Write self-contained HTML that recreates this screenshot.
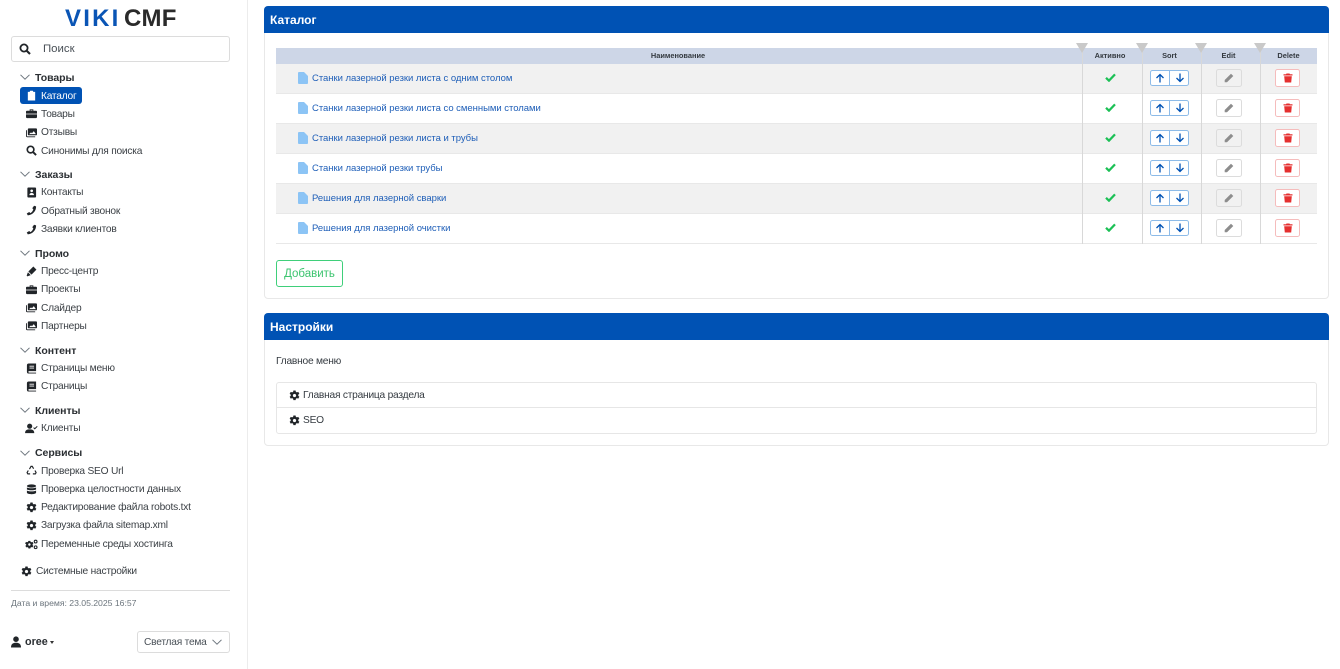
<!DOCTYPE html>
<html lang="ru"><head><meta charset="utf-8"><title>VikiCMF</title>
<style>
*{box-sizing:border-box}
html,body{margin:0;padding:0;background:#fff;width:1340px;height:669px;overflow:hidden}
body{position:relative;font-family:"Liberation Sans",sans-serif;font-size:10.2px;letter-spacing:-.22px;color:#333}
.a{position:absolute;white-space:nowrap}
#side{position:absolute;left:0;top:0;width:248px;height:669px;border-right:1px solid #ececec}
.h{position:absolute;left:35px;font-weight:bold;font-size:10.5px;letter-spacing:-.05px;line-height:16px;margin-top:1px;color:#2b2f33;white-space:nowrap}
.i{position:absolute;left:41px;line-height:16px;margin-top:1px;white-space:nowrap;color:#3a3f44}
.c{position:absolute;left:20px;width:10px;height:10px}
.ic{position:absolute;left:26px;width:11px;height:11px;fill:#212529}
.card{position:absolute;left:264px;width:1065px;border:1px solid #e8e8e8;border-radius:4px;background:#fff}
.ch{position:absolute;left:-1px;top:-1px;width:1065px;height:27px;background:#0052b4;border-radius:4px 4px 0 0;color:#fff;font-weight:bold;font-size:12px;letter-spacing:0;line-height:28px;padding-left:6px}
.row{position:absolute;left:276px;width:1041px;height:30px;border-bottom:1px solid #e8e8e8}
.g{background:#f1f1f1}
.l{position:absolute;left:312px;line-height:16px;margin-top:1px;color:#1f5fb8;font-size:9.5px;letter-spacing:-.03px;white-space:nowrap}
.th{position:absolute;top:48px;height:16px;line-height:16px;font-size:7.4px;letter-spacing:0;font-weight:bold;color:#343a40;text-align:center}
.v{position:absolute;top:44px;width:1px;height:200px;background:#d8d8d8}
.tri{position:absolute;top:43px;width:0;height:0;border-left:6px solid transparent;border-right:6px solid transparent;border-top:10px solid #c9c9c9}
.btn{position:absolute;border-radius:2.5px;background:transparent;height:18px}
.up{left:1150px;width:39px;height:16px;border:1px solid #8dbbe8;background:#fff}
.up:after{content:"";position:absolute;left:18px;top:0;width:1px;height:14px;background:#8dbbe8}
.ed{left:1216px;width:26px;border:1px solid #dcdcdc}
.de{left:1275px;width:25px;border:1px solid #f5bcbc;background:#fff}
</style></head><body>
<svg width="0" height="0" style="position:absolute">
<defs>
<symbol id="chev" viewBox="0 0 10 10"><path d="M.5 2.8 5 7.2 9.5 2.8" fill="none" stroke="#6c757d" stroke-width="1"/></symbol>
<symbol id="search" viewBox="0 0 12 12"><circle cx="5" cy="5" r="3.6" fill="none" stroke="currentColor" stroke-width="1.8"/><path d="M7.7 7.7 11 11" stroke="currentColor" stroke-width="2.1"/></symbol>
<symbol id="clip" viewBox="0 0 12 12"><path d="M2 2h2l.5-1.2h3L8 2h2v9.500H2z"/></symbol>
<symbol id="brief" viewBox="0 0 12 12"><path d="M4 3V1.500h4V3h3a1 1 0 0 1 1 1v2.200H0V4a1 1 0 0 1 1-1zM5 2.400V3h2v-.6zM0 7h12v3a1 1 0 0 1-1 1H1a1 1 0 0 1-1-1z"/></symbol>
<symbol id="imgs" viewBox="0 0 12 12"><path fill-rule="evenodd" d="M3 1.500h8a1 1 0 0 1 1 1V8a1 1 0 0 1-1 1H3a1 1 0 0 1-1-1V2.500a1 1 0 0 1 1-1zM3.300 7.800h7.500L8.500 4.500 6.500 6.800 5.500 5.800zM0 3.500h1V9.500a.7.7 0 0 0 .7.700H10v1H1.500A1.500 1.500 0 0 1 0 9.700z"/></symbol>
<symbol id="contact" viewBox="0 0 12 12"><path fill-rule="evenodd" d="M2.500 .5h7.500a1 1 0 0 1 1 1v9a1 1 0 0 1-1 1H2.500a1 1 0 0 1-1-1v-9a1 1 0 0 1 1-1zM6.200 2.700a1.500 1.500 0 1 0 .01 0zM3.700 8.800h5c0-1.500-1-2.200-2.500-2.200s-2.500.7-2.500 2.200z"/></symbol>
<symbol id="phone" viewBox="0 0 12 12"><path d="M8.800.8 11 1.500c.3 4.500-3.500 9.500-9 9.800L.8 9.300 3.500 7.600 4.800 8.800C6.500 8 7.500 6.500 8 4.700L6.800 3.600z"/></symbol>
<symbol id="pen" viewBox="0 0 12 12"><path d="M8 .6 11.400 4 6 9.400 2.600 6zM2.100 6.800 5.200 9.900 1.500 11.300.7 10.500z"/></symbol>
<symbol id="book" viewBox="0 0 12 12"><path fill-rule="evenodd" d="M3 .5h8v8.300H3.200a.9.900 0 0 0 0 1.700H11v1H3A2 2 0 0 1 1 9.500v-7a2 2 0 0 1 2-2zM3.800 3v1h5V3zM3.800 5v1h5V5z"/></symbol>
<symbol id="user" viewBox="0 0 12 12"><circle cx="6" cy="3.200" r="2.800"/><path d="M1 11.500C1 8 3 6.800 6 6.800s5 1.200 5 4.700z"/></symbol>
<symbol id="userc" viewBox="0 0 14 12"><circle cx="5" cy="3.500" r="2.800"/><path d="M0 11C0 8 2 7 5 7s5 1 5 4z"/><path d="M9.300 5 10.600 6.300 13.300 3.600" fill="none" stroke="#212529" stroke-width="1.100"/></symbol>
<symbol id="recycle" viewBox="0 0 12 12"><g fill="none" stroke="#212529" stroke-width="1.300"><path d="M3.800 4.500 5.500 1.500h1.300L8.300 4"/><path d="M9.800 6 11 8.300l-.8 1.400H7.500"/><path d="M4.500 9.700H2L1.200 8.300 2.500 6"/></g></symbol>
<symbol id="db" viewBox="0 0 12 12"><ellipse cx="6" cy="2.200" rx="5" ry="1.800"/><path d="M1 3.700C2 5 10 5 11 3.700v2.100C10 7.100 2 7.100 1 5.800zM1 7.100C2 8.400 10 8.400 11 7.100v2.600c-1 1.900-9 1.900-10 0z"/></symbol>
<symbol id="gear" viewBox="0 0 12 12"><path fill-rule="evenodd" d="M4.800.5h2.400l.3 1.500 1.100.6 1.500-.5 1.200 2-1.200 1 .01 1.300 1.200 1-1.200 2-1.500-.5-1.100.6-.3 1.500H4.800l-.3-1.500-1.100-.6-1.500.5-1.200-2 1.200-1V5.100l-1.200-1 1.200-2 1.500.5 1.100-.6zM6 4.200a1.800 1.800 0 1 0 .01 0z"/></symbol>
<symbol id="gears" viewBox="0 0 14 12"><path fill-rule="evenodd" d="M3.700 2h2l.3 1.100 1 .5 1.100-.4 1 1.700-.9.800v1l.9.800-1 1.700-1.100-.4-1 .5-.3 1.100h-2l-.3-1.100-1-.5-1.100.4-1-1.700.9-.8v-1L0 4.900l1-1.700 1.100.4 1-.5zM4.700 4.700a1.300 1.300 0 1 0 .01 0z"/><circle cx="11.500" cy="2.800" r="1.500" fill="none" stroke="#212529" stroke-width="1.200"/><circle cx="11.500" cy="9" r="1.500" fill="none" stroke="#212529" stroke-width="1.200"/></symbol>
<symbol id="file" viewBox="0 0 10 12"><path d="M1 0h5l4 4v7a1 1 0 0 1-1 1H1a1 1 0 0 1-1-1V1a1 1 0 0 1 1-1z" fill="#8cc4f5"/></symbol>
<symbol id="check" viewBox="0 0 12 10"><path d="M1 5.300 4.300 8.500 11 1.500" fill="none" stroke="#1cc056" stroke-width="2.500"/></symbol>
<symbol id="arrup" viewBox="0 0 10 10"><path d="M5 9.500V1.500M1.500 5 5 1.500 8.500 5" fill="none" stroke="#0052b4" stroke-width="1.300"/></symbol>
<symbol id="arrdn" viewBox="0 0 10 10"><path d="M5 .5V8.500M1.500 5 5 8.500 8.500 5" fill="none" stroke="#0052b4" stroke-width="1.300"/></symbol>
<symbol id="pencil" viewBox="0 0 10 10"><path d="M7 .7 9.300 3 3 9.300H.7V7z" fill="#8d8d8d"/></symbol>
<symbol id="trash" viewBox="0 0 10 10"><path d="M3.500.5h3L7 1.300h2.500v1.200H.5V1.300H3zM1.200 3.200h7.600L8.200 9.500H1.800z" fill="#e52f2f"/></symbol>
</defs></svg>

<div id="side">
<div class="a" style="left:65px;top:6px;font-size:24px;line-height:26px;font-weight:bold;color:#0a55b5;letter-spacing:2.200px">VIKI</div>
<div class="a" style="left:124px;top:6px;font-size:24px;line-height:26px;font-weight:bold;color:#2a2a2a;letter-spacing:.2px">CMF</div>
<div class="a" style="left:11px;top:36px;width:219px;height:26px;border:1px solid #dcdcdc;border-radius:3px"></div>
<svg class="a" style="left:19px;top:43px;color:#212529" width="12" height="12"><use href="#search"/></svg>
<div class="a" style="left:43px;top:41px;line-height:16px;font-size:11.400px;letter-spacing:0;color:#495057">Поиск</div>

<svg class="c" style="top:72px"><use href="#chev"/></svg><div class="h" style="top:69px">Товары</div>
<div class="a" style="left:20px;top:87px;width:62px;height:17px;background:#0052b4;border-radius:3px"></div>
<svg class="ic" style="top:90px;fill:#fff"><use href="#clip"/></svg><div class="i" style="top:88px;color:#fff">Каталог</div>
<svg class="ic" style="top:108px"><use href="#brief"/></svg><div class="i" style="top:106px">Товары</div>
<svg class="ic" style="top:127px"><use href="#imgs"/></svg><div class="i" style="top:124px">Отзывы</div>
<svg class="ic" style="top:145px;color:#212529"><use href="#search"/></svg><div class="i" style="top:143px">Синонимы для поиска</div>

<svg class="c" style="top:169px"><use href="#chev"/></svg><div class="h" style="top:166px">Заказы</div>
<svg class="ic" style="top:187px"><use href="#contact"/></svg><div class="i" style="top:184px">Контакты</div>
<svg class="ic" style="top:205px"><use href="#phone"/></svg><div class="i" style="top:203px">Обратный звонок</div>
<svg class="ic" style="top:224px"><use href="#phone"/></svg><div class="i" style="top:221px">Заявки клиентов</div>

<svg class="c" style="top:248px"><use href="#chev"/></svg><div class="h" style="top:245px">Промо</div>
<svg class="ic" style="top:266px"><use href="#pen"/></svg><div class="i" style="top:263px">Пресс-центр</div>
<svg class="ic" style="top:284px"><use href="#brief"/></svg><div class="i" style="top:281px">Проекты</div>
<svg class="ic" style="top:302px"><use href="#imgs"/></svg><div class="i" style="top:300px">Слайдер</div>
<svg class="ic" style="top:320px"><use href="#imgs"/></svg><div class="i" style="top:318px">Партнеры</div>

<svg class="c" style="top:345px"><use href="#chev"/></svg><div class="h" style="top:342px">Контент</div>
<svg class="ic" style="top:363px"><use href="#book"/></svg><div class="i" style="top:360px">Страницы меню</div>
<svg class="ic" style="top:381px"><use href="#book"/></svg><div class="i" style="top:378px">Страницы</div>

<svg class="c" style="top:405px"><use href="#chev"/></svg><div class="h" style="top:402px">Клиенты</div>
<svg class="ic" style="top:423px;left:25px;width:13px"><use href="#userc"/></svg><div class="i" style="top:420px">Клиенты</div>

<svg class="c" style="top:448px"><use href="#chev"/></svg><div class="h" style="top:444px">Сервисы</div>
<svg class="ic" style="top:465px"><use href="#recycle"/></svg><div class="i" style="top:463px">Проверка SEO Url</div>
<svg class="ic" style="top:484px"><use href="#db"/></svg><div class="i" style="top:481px">Проверка целостности данных</div>
<svg class="ic" style="top:502px"><use href="#gear"/></svg><div class="i" style="top:499px">Редактирование файла robots.txt</div>
<svg class="ic" style="top:520px"><use href="#gear"/></svg><div class="i" style="top:517px">Загрузка файла sitemap.xml</div>
<svg class="ic" style="top:539px;left:25px;width:13px"><use href="#gears"/></svg><div class="i" style="top:536px">Переменные среды хостинга</div>

<svg class="ic" style="top:566px;left:21px"><use href="#gear"/></svg><div class="i" style="top:563px;left:36px">Системные настройки</div>
<div class="a" style="left:11px;top:590px;width:219px;height:1px;background:#dcdcdc"></div>
<div class="a" style="left:11px;top:595px;line-height:16px;font-size:8.700px;letter-spacing:-.03px;color:#6c757d">Дата и время: 23.05.2025 16:57</div>
<svg class="ic" style="top:636px;left:10px;width:12px;height:12px"><use href="#user"/></svg>
<div class="a" style="left:25px;top:634px;line-height:16px;font-weight:bold;font-size:10.800px;letter-spacing:0;color:#2b2f33">oree</div>
<div class="a" style="left:50px;top:641px;width:0;height:0;border-left:2.500px solid transparent;border-right:2.500px solid transparent;border-top:3px solid #333"></div>
<div class="a" style="left:137px;top:631px;width:93px;height:22px;border:1px solid #dcdcdc;border-radius:3px"></div>
<div class="a" style="left:144px;top:635px;line-height:16px;color:#495057">Светлая тема</div>
<svg class="a" style="left:212px;top:637px" width="10" height="10"><use href="#chev"/></svg>
</div>

<div class="card" style="top:6px;height:293px"><div class="ch">Каталог</div></div>
<div class="card" style="top:313px;height:133px"><div class="ch">Настройки</div></div>

<div class="a" style="left:276px;top:48px;width:1041px;height:16px;background:#cdd6e7"></div>
<div class="row g" style="top:64px"></div>
<div class="row" style="top:94px"></div>
<div class="row g" style="top:124px"></div>
<div class="row" style="top:154px"></div>
<div class="row g" style="top:184px"></div>
<div class="row" style="top:214px"></div>

<div class="th" style="left:275px;width:806px">Наименование</div>
<div class="th" style="left:1080px;width:60px">Активно</div>
<div class="th" style="left:1140px;width:59px">Sort</div>
<div class="th" style="left:1199px;width:59px">Edit</div>
<div class="th" style="left:1260px;width:57px">Delete</div>

<div class="v" style="left:1082px"></div><div class="v" style="left:1142px"></div><div class="v" style="left:1201px"></div><div class="v" style="left:1260px"></div>
<div class="tri" style="left:1076px"></div><div class="tri" style="left:1136px"></div><div class="tri" style="left:1195px"></div><div class="tri" style="left:1254px"></div>

<svg class="a" style="left:298px;top:72px" width="10" height="12"><use href="#file"/></svg><div class="l" style="top:70px">Станки лазерной резки листа с одним столом</div>
<svg class="a" style="left:298px;top:102px" width="10" height="12"><use href="#file"/></svg><div class="l" style="top:100px">Станки лазерной резки листа со сменными столами</div>
<svg class="a" style="left:298px;top:132px" width="10" height="12"><use href="#file"/></svg><div class="l" style="top:130px">Станки лазерной резки листа и трубы</div>
<svg class="a" style="left:298px;top:162px" width="10" height="12"><use href="#file"/></svg><div class="l" style="top:160px">Станки лазерной резки трубы</div>
<svg class="a" style="left:298px;top:192px" width="10" height="12"><use href="#file"/></svg><div class="l" style="top:190px">Решения для лазерной сварки</div>
<svg class="a" style="left:298px;top:222px" width="10" height="12"><use href="#file"/></svg><div class="l" style="top:220px">Решения для лазерной очистки</div>

<svg class="a" style="left:1105px;top:73px" width="11" height="9"><use href="#check"/></svg>
<svg class="a" style="left:1105px;top:103px" width="11" height="9"><use href="#check"/></svg>
<svg class="a" style="left:1105px;top:133px" width="11" height="9"><use href="#check"/></svg>
<svg class="a" style="left:1105px;top:163px" width="11" height="9"><use href="#check"/></svg>
<svg class="a" style="left:1105px;top:193px" width="11" height="9"><use href="#check"/></svg>
<svg class="a" style="left:1105px;top:223px" width="11" height="9"><use href="#check"/></svg>

<div class="btn up" style="top:70px"></div><div class="btn up" style="top:100px"></div><div class="btn up" style="top:130px"></div><div class="btn up" style="top:160px"></div><div class="btn up" style="top:190px"></div><div class="btn up" style="top:220px"></div>
<svg class="a" style="left:1155px;top:73px" width="10" height="10"><use href="#arrup"/></svg><svg class="a" style="left:1175px;top:73px" width="10" height="10"><use href="#arrdn"/></svg>
<svg class="a" style="left:1155px;top:103px" width="10" height="10"><use href="#arrup"/></svg><svg class="a" style="left:1175px;top:103px" width="10" height="10"><use href="#arrdn"/></svg>
<svg class="a" style="left:1155px;top:133px" width="10" height="10"><use href="#arrup"/></svg><svg class="a" style="left:1175px;top:133px" width="10" height="10"><use href="#arrdn"/></svg>
<svg class="a" style="left:1155px;top:163px" width="10" height="10"><use href="#arrup"/></svg><svg class="a" style="left:1175px;top:163px" width="10" height="10"><use href="#arrdn"/></svg>
<svg class="a" style="left:1155px;top:193px" width="10" height="10"><use href="#arrup"/></svg><svg class="a" style="left:1175px;top:193px" width="10" height="10"><use href="#arrdn"/></svg>
<svg class="a" style="left:1155px;top:223px" width="10" height="10"><use href="#arrup"/></svg><svg class="a" style="left:1175px;top:223px" width="10" height="10"><use href="#arrdn"/></svg>

<div class="btn ed" style="top:69px"></div><div class="btn ed" style="top:99px"></div><div class="btn ed" style="top:129px"></div><div class="btn ed" style="top:159px"></div><div class="btn ed" style="top:189px"></div><div class="btn ed" style="top:219px"></div>
<svg class="a" style="left:1224px;top:73px" width="10" height="10"><use href="#pencil"/></svg>
<svg class="a" style="left:1224px;top:103px" width="10" height="10"><use href="#pencil"/></svg>
<svg class="a" style="left:1224px;top:133px" width="10" height="10"><use href="#pencil"/></svg>
<svg class="a" style="left:1224px;top:163px" width="10" height="10"><use href="#pencil"/></svg>
<svg class="a" style="left:1224px;top:193px" width="10" height="10"><use href="#pencil"/></svg>
<svg class="a" style="left:1224px;top:223px" width="10" height="10"><use href="#pencil"/></svg>

<div class="btn de" style="top:69px"></div><div class="btn de" style="top:99px"></div><div class="btn de" style="top:129px"></div><div class="btn de" style="top:159px"></div><div class="btn de" style="top:189px"></div><div class="btn de" style="top:219px"></div>
<svg class="a" style="left:1283px;top:73px" width="10" height="10"><use href="#trash"/></svg>
<svg class="a" style="left:1283px;top:103px" width="10" height="10"><use href="#trash"/></svg>
<svg class="a" style="left:1283px;top:133px" width="10" height="10"><use href="#trash"/></svg>
<svg class="a" style="left:1283px;top:163px" width="10" height="10"><use href="#trash"/></svg>
<svg class="a" style="left:1283px;top:193px" width="10" height="10"><use href="#trash"/></svg>
<svg class="a" style="left:1283px;top:223px" width="10" height="10"><use href="#trash"/></svg>

<div class="a" style="left:276px;top:260px;width:67px;height:27px;border:1px solid #3fcf7a;border-radius:3px;color:#3cc46f;font-size:11.500px;letter-spacing:0;line-height:26px;text-align:center">Добавить</div>

<div class="a" style="left:276px;top:354px;line-height:16px;color:#343a40">Главное меню</div>
<div class="a" style="left:276px;top:382px;width:1041px;height:52px;border:1px solid #e6e6e6;border-radius:3px"></div>
<div class="a" style="left:277px;top:407px;width:1039px;height:1px;background:#e6e6e6"></div>
<svg class="ic" style="left:289px;top:390px"><use href="#gear"/></svg><div class="a" style="left:303px;top:388px;line-height:16px;color:#343a40">Главная страница раздела</div>
<svg class="ic" style="left:289px;top:415px"><use href="#gear"/></svg><div class="a" style="left:303px;top:413px;line-height:16px;color:#343a40">SEO</div>
</body></html>
